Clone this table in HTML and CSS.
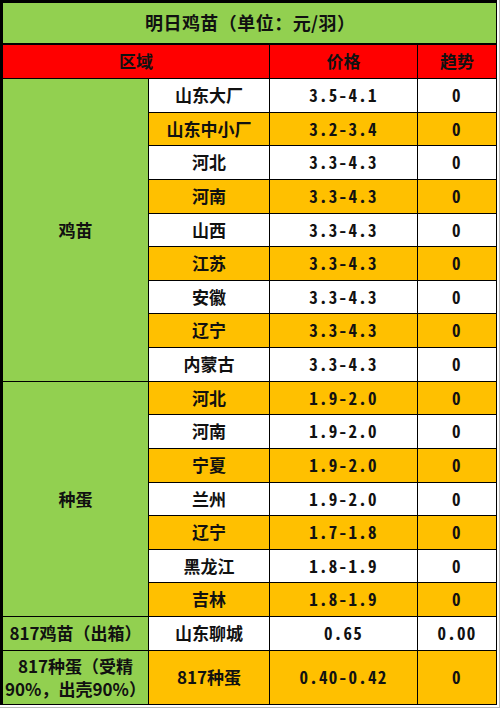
FILE: index.html
```html
<!DOCTYPE html>
<html lang="zh-CN">
<head>
<meta charset="utf-8">
<title>明日鸡苗</title>
<link rel="stylesheet" href="styles.css">
</head>
<body>
<div class="frame">
<div class="sheet">
  <div class="cell title green"><span class="title-text">明日鸡苗（单位：元/羽）</span></div>

  <div class="cell head red span2">区域</div>
  <div class="cell head red">价格</div>
  <div class="cell head red">趋势</div>

  <div class="cell green group g1">鸡苗</div>
  <div class="cell white">山东大厂</div><div class="cell white num">3.5-4.1</div><div class="cell white num">0</div>
  <div class="cell yellow">山东中小厂</div><div class="cell yellow num">3.2-3.4</div><div class="cell yellow num">0</div>
  <div class="cell white">河北</div><div class="cell white num">3.3-4.3</div><div class="cell white num">0</div>
  <div class="cell yellow">河南</div><div class="cell yellow num">3.3-4.3</div><div class="cell yellow num">0</div>
  <div class="cell white">山西</div><div class="cell white num">3.3-4.3</div><div class="cell white num">0</div>
  <div class="cell yellow">江苏</div><div class="cell yellow num">3.3-4.3</div><div class="cell yellow num">0</div>
  <div class="cell white">安徽</div><div class="cell white num">3.3-4.3</div><div class="cell white num">0</div>
  <div class="cell yellow">辽宁</div><div class="cell yellow num">3.3-4.3</div><div class="cell yellow num">0</div>
  <div class="cell white">内蒙古</div><div class="cell white num">3.3-4.3</div><div class="cell white num">0</div>

  <div class="cell green group g2">种蛋</div>
  <div class="cell yellow">河北</div><div class="cell yellow num">1.9-2.0</div><div class="cell yellow num">0</div>
  <div class="cell white">河南</div><div class="cell white num">1.9-2.0</div><div class="cell white num">0</div>
  <div class="cell yellow">宁夏</div><div class="cell yellow num">1.9-2.0</div><div class="cell yellow num">0</div>
  <div class="cell white">兰州</div><div class="cell white num">1.9-2.0</div><div class="cell white num">0</div>
  <div class="cell yellow">辽宁</div><div class="cell yellow num">1.7-1.8</div><div class="cell yellow num">0</div>
  <div class="cell white">黑龙江</div><div class="cell white num">1.8-1.9</div><div class="cell white num">0</div>
  <div class="cell yellow">吉林</div><div class="cell yellow num">1.8-1.9</div><div class="cell yellow num">0</div>

  <div class="cell green">817鸡苗（出箱）</div>
  <div class="cell white">山东聊城</div><div class="cell white num">0.65</div><div class="cell white num">0.00</div>

  <div class="cell green wrap">817种蛋（受精<br>90%，出壳90%）</div>
  <div class="cell yellow">817种蛋</div><div class="cell yellow num">0.40-0.42</div><div class="cell yellow num">0</div>
</div>
</div>
</body>
</html>
```
FILE: styles.css
```css
html, body {
  margin: 0;
  padding: 0;
  background: #ffffff;
}

.frame {
  width: 497px;
  padding: 0 2px 2px 0;
  border-right: 1px solid #b8b8b8;
  border-bottom: 1px solid #b8b8b8;
}

.sheet {
  box-sizing: border-box;
  width: 497px;
  display: grid;
  grid-template-columns: 146px 121px 148px 79px;
  grid-template-rows: 42px 34px repeat(16, 33.625px) 34px 54px;
  border-top: 3px solid #000;
  border-left: 3px solid #000;
  font-family: "Noto Sans CJK SC", "Noto Sans", sans-serif;
  font-weight: 700;
  font-size: 17px;
  color: #111;
  text-spacing-trim: space-all;
  font-feature-settings: "chws" 0, "halt" 0, "palt" 0;
}

.cell {
  box-sizing: border-box;
  display: flex;
  align-items: center;
  justify-content: center;
  text-align: center;
  border-right: 1px solid #000;
  border-bottom: 1px solid #000;
  white-space: nowrap;
  line-height: 1.2;
}

.title {
  grid-column: 1 / -1;
  border-bottom: 2px solid #000;
  font-size: 18px;
  padding-left: 1px;
}

.title-text {
  display: inline-block;
  width: 210px;
  white-space: normal;
  text-align: justify;
  text-align-last: justify;
  text-justify: inter-character;
}

.span2 {
  grid-column: span 2;
}

.g1 {
  grid-row: span 9;
}

.g2 {
  grid-row: span 7;
}

.wrap {
  white-space: normal;
  line-height: 1.35;
}

.num {
  font-size: 17px;
  font-feature-settings: "hwid" 1;
  letter-spacing: 1.3px;
}

.green { background: #92d050; }
.red { background: #ff0000; }
.yellow { background: #ffc000; }
.white { background: #ffffff; }
```
